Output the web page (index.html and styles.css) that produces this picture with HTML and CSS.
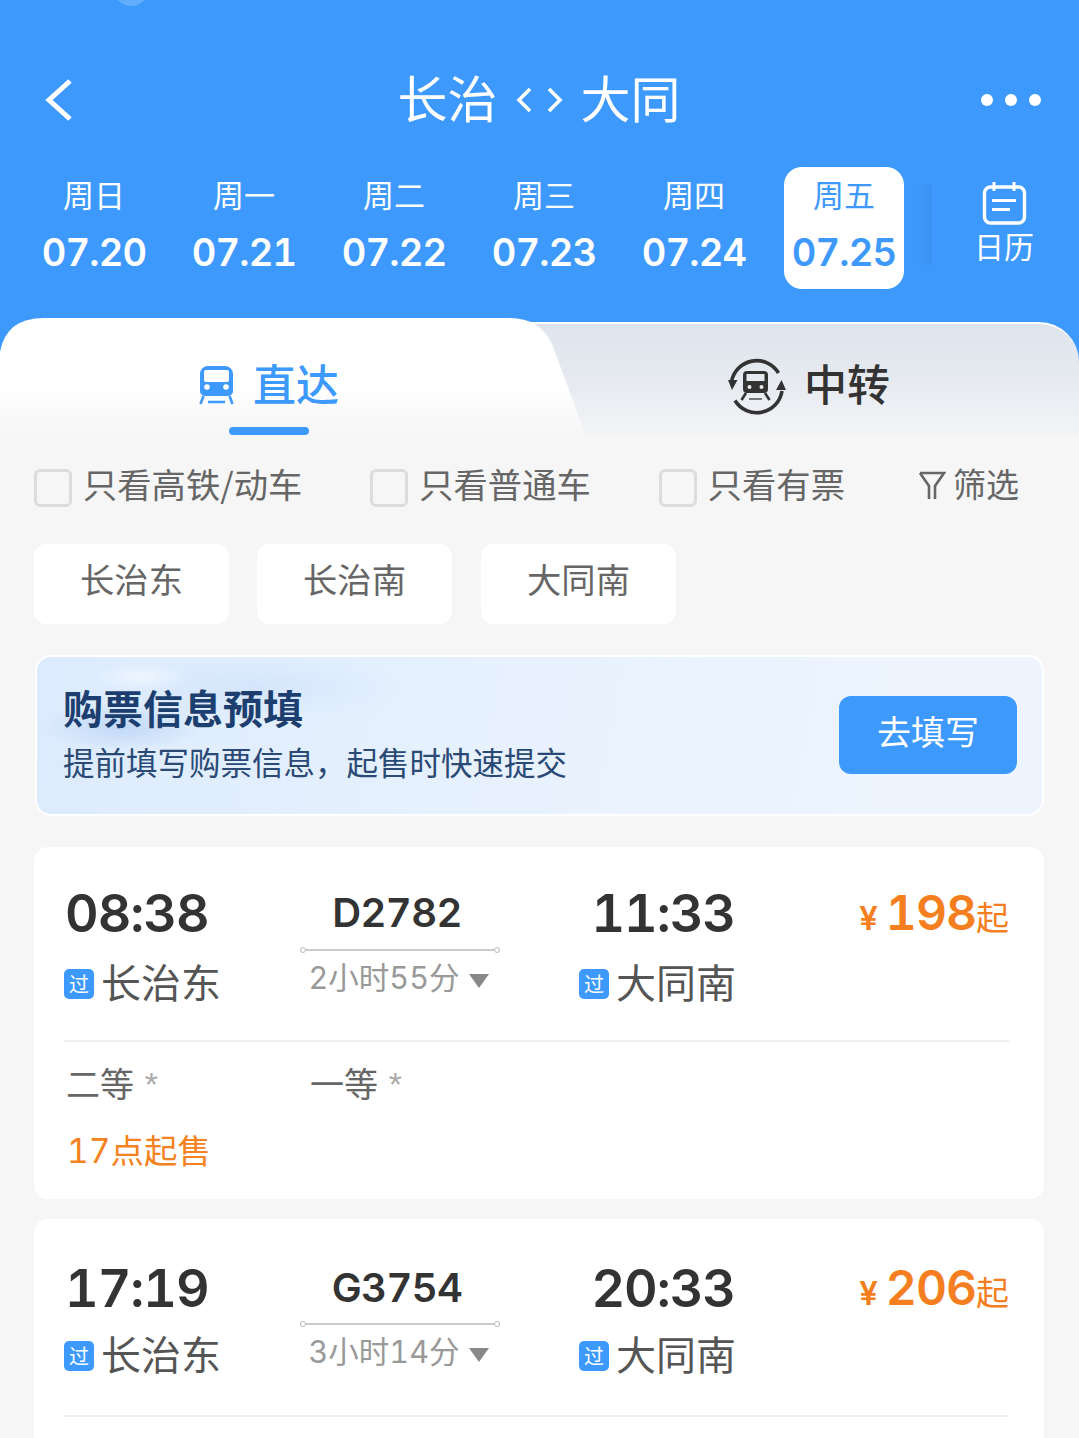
FILE: index.html
```html
<!DOCTYPE html>
<html lang="zh">
<head>
    <meta charset="UTF-8">
    <title>长治 - 大同</title>
    <link rel="stylesheet" href="styles.css">
</head>
<body>
    <div id="page">
        <div class="top">
            <span class="status-dot"></span>
            <div class="nav">
                <svg class="nav-back" width="28" height="42" viewBox="0 0 28 42"><path d="M25 2 L4 21 L25 40" fill="none" stroke="#fff" stroke-width="5"/></svg>
                <div class="nav-title">
                    <span>长治</span>
                    <svg width="47" height="30" viewBox="0 0 47 30"><path d="M14 4 L3 15 L14 26 M33 4 L44 15 L33 26" fill="none" stroke="#fff" stroke-width="3.6"/></svg>
                    <span>大同</span>
                </div>
                <div class="nav-more"><i></i><i></i><i></i></div>
            </div>
            <div class="dates">
                <div class="date"><span>周日</span><b>07.20</b></div>
                <div class="date"><span>周一</span><b>07.21</b></div>
                <div class="date"><span>周二</span><b>07.22</b></div>
                <div class="date"><span>周三</span><b>07.23</b></div>
                <div class="date"><span>周四</span><b>07.24</b></div>
                <div class="date date-on"><span>周五</span><b>07.25</b></div>
                <div class="calendar">
                    <svg width="45" height="44" viewBox="0 0 45 44"><rect x="2.5" y="6" width="40" height="36" rx="6" fill="none" stroke="#fff" stroke-width="3.4"/><path d="M12 1v9 M32 1v9" stroke="#fff" stroke-width="3"/><path d="M10 19.500h24 M10 28.500h18" stroke="#fff" stroke-width="3"/></svg>
                    <span>日历</span>
                </div>
            </div>
        </div>

        <div class="tabs-wrap">
            <div class="tabs">
                <svg class="tab-shape" width="590" height="118" viewBox="0 0 590 118">
                    <defs>
                        <linearGradient id="tabFade" x1="0" y1="0" x2="0" y2="1">
                            <stop offset="0" stop-color="#fff"/>
                            <stop offset="0.6" stop-color="#fff"/>
                            <stop offset="1" stop-color="#f6f6f7"/>
                        </linearGradient>
                    </defs>
                    <path d="M0 34 Q6 0 44 0 H510 Q540 0 552 26 L586 118 H0 Z" fill="url(#tabFade)"/>
                </svg>
                <div class="tab tab-on">
                    <svg class="tab-icon" width="36" height="40" viewBox="0 0 36 40"><path d="M9 1h17a8 8 0 0 1 8 8v17a5 5 0 0 1-5 5H6a5 5 0 0 1-5-5V9a8 8 0 0 1 8-8z M7 5a2 2 0 0 0-2 2v8a2 2 0 0 0 2 2h21a2 2 0 0 0 2-2V7a2 2 0 0 0-2-2z" fill="#3d99fc" fill-rule="evenodd"/><circle cx="8" cy="22" r="2.800" fill="#fff"/><circle cx="27" cy="22" r="2.800" fill="#fff"/><path d="M4.500 31 L1.500 39 M30.500 31 L33.500 39 M9 37h17" stroke="#3d99fc" stroke-width="2.600" fill="none"/></svg>
                    <span>直达</span>
                    <i class="tab-bar"></i>
                </div>
                <div class="tab">
                    <svg class="tab-icon-swap" width="58" height="58" viewBox="0 0 58 58"><path d="M3.500 24 A25.500 25.500 0 0 1 50.500 15 M54 33 A25.500 25.500 0 0 1 7 42.500" fill="none" stroke="#333" stroke-width="3.600"/><path d="M0 22 L9.500 22 L4 32 Z M53.500 22 L58 32 L48 32 Z" fill="#333"/><path d="M19 13h17a4 4 0 0 1 4 4v14a4 4 0 0 1-4 4H19a4 4 0 0 1-4-4V17a4 4 0 0 1 4-4z M18.500 16v7h18v-7z" fill="#333" fill-rule="evenodd"/><circle cx="21.500" cy="29" r="2" fill="#e8ebf0"/><circle cx="33.500" cy="29" r="2" fill="#e8ebf0"/><path d="M18 35 L13.500 42 M37 35 L41.500 42" stroke="#333" stroke-width="2.600" fill="none"/><path d="M21 41h13" stroke="#777" stroke-width="2" fill="none"/></svg>
                    <span>中转</span>
                </div>
            </div>
        </div>

        <div class="filters">
            <label class="check"><i></i><span>只看高铁/动车</span></label>
            <label class="check"><i></i><span>只看普通车</span></label>
            <label class="check"><i></i><span>只看有票</span></label>
            <div class="filter-btn">
                <svg width="28" height="30" viewBox="0 0 28 30"><path d="M2 2h24L17 15v13 M2 2l9 13v13" fill="none" stroke="#666" stroke-width="2.600"/></svg>
                <span>筛选</span>
            </div>
        </div>

        <div class="chips">
            <div class="chip">长治东</div>
            <div class="chip">长治南</div>
            <div class="chip">大同南</div>
        </div>

        <div class="banner">
            <div class="banner-text">
                <h2>购票信息预填</h2>
                <p>提前填写购票信息，起售时快速提交</p>
            </div>
            <button class="banner-btn">去填写</button>
        </div>

        <div class="card">
            <div class="trip">
                <div class="stop">
                    <b class="time">08:38</b>
                    <div class="station"><i>过</i><span>长治东</span></div>
                </div>
                <div class="train">
                    <b>D2782</b>
                    <div class="train-line"></div>
                    <div class="train-dur">2小时55分<i></i></div>
                </div>
                <div class="stop stop-end">
                    <b class="time">11:33</b>
                    <div class="station"><i>过</i><span>大同南</span></div>
                </div>
                <div class="price"><small>¥</small><b>198</b><span>起</span></div>
            </div>
            <div class="seats">
                <div class="seat">二等 <em>*</em></div>
                <div class="seat">一等 <em>*</em></div>
            </div>
            <div class="sale">17点起售</div>
        </div>

        <div class="card">
            <div class="trip">
                <div class="stop">
                    <b class="time">17:19</b>
                    <div class="station"><i>过</i><span>长治东</span></div>
                </div>
                <div class="train">
                    <b>G3754</b>
                    <div class="train-line"></div>
                    <div class="train-dur">3小时14分<i></i></div>
                </div>
                <div class="stop stop-end">
                    <b class="time">20:33</b>
                    <div class="station"><i>过</i><span>大同南</span></div>
                </div>
                <div class="price"><small>¥</small><b>206</b><span>起</span></div>
            </div>
        </div>
    </div>
</body>
</html>
```

FILE: styles.css
```css
html, body {
    margin: 0;
    padding: 0;
    height: 100%;
}

body {
    background: #f6f6f7;
    font-family: "Noto Sans CJK SC", "Noto Sans", sans-serif;
    overflow: hidden;
}

#page {
    height: 1438px;
    overflow: hidden;
}

.top {
    position: relative;
    background: #3d99fc;
    height: 318px;
}

.status-dot {
    position: absolute;
    left: 113px;
    top: -30px;
    width: 36px;
    height: 36px;
    border-radius: 50%;
    background: #62adfd;
}

.nav {
    height: 167px;
    padding: 32px 38px 0 45px;
    box-sizing: border-box;
    display: grid;
    grid-template-columns: 1fr auto 1fr;
    align-items: center;
}

.nav-title {
    display: flex;
    align-items: center;
    gap: 18px;
    margin-right: 8px;
    color: #fff;
    font-size: 50px;
    line-height: 60px;
}

    .nav-title span {
        padding-bottom: 8px;
    }

.nav-more {
    display: flex;
    justify-content: flex-end;
    gap: 12px;
}

    .nav-more i {
        width: 12px;
        height: 12px;
        border-radius: 50%;
        background: #fff;
    }

.dates {
    display: flex;
    gap: 30px;
    padding-left: 34px;
}

.date {
    width: 120px;
    height: 122px;
    border-radius: 18px;
    color: #fff;
    display: flex;
    flex-direction: column;
    align-items: center;
}

    .date span {
        font-size: 31px;
        line-height: 54px;
        padding-bottom: 4px;
    }

    .date b {
        font-family: Inter, sans-serif;
        font-variant-numeric: tabular-nums;
        font-weight: 600;
        font-size: 38px;
        line-height: 54px;
        letter-spacing: -.8px;
    }

.date-on {
    position: relative;
    background: #fff;
    color: #3d99fc;
}

    .date-on::after {
        content: "";
        position: absolute;
        left: 132px;
        top: 18px;
        width: 16px;
        height: 80px;
        background: linear-gradient(90deg, rgba(56, 142, 232, 0), rgba(56, 142, 232, .55));
    }

.calendar {
    width: 90px;
    margin-left: 25px;
    padding-top: 14px;
    color: #fff;
    display: flex;
    flex-direction: column;
    align-items: center;
}

    .calendar span {
        font-size: 30px;
        line-height: 40px;
    }

.tabs-wrap {
    background: linear-gradient(#3d99fc 60px, #f6f6f7 60px);
}

.tabs {
    position: relative;
    height: 118px;
    display: flex;
}

    .tabs::before {
        content: "";
        position: absolute;
        left: 0;
        right: 0;
        top: 4px;
        bottom: 0;
        border-top: 2px solid #fff;
        border-radius: 40px 40px 0 0;
        background: linear-gradient(#dde4ec, #e8ecf1 60%, #f3f4f6);
    }

.tab-shape {
    position: absolute;
    left: 0;
    top: 0;
}

.tab {
    position: relative;
    flex: 1;
    display: flex;
    align-items: center;
    justify-content: center;
    gap: 18px;
    font-size: 43px;
    font-weight: 500;
    color: #333;
    padding-top: 10px;
}

    .tab:last-child {
        flex: none;
        width: 540px;
    }

.tab-on {
    color: #3d99fc;
    padding-right: 1px;
}

.tab-icon {
    margin-top: 6px;
}

.tab-icon-swap {
    margin-top: 10px;
}

.tab-bar {
    position: absolute;
    left: 229px;
    bottom: 1px;
    width: 80px;
    height: 8px;
    border-radius: 4px;
    background: #3d99fc;
}

.filters {
    display: flex;
    gap: 68px;
    align-items: center;
    padding: 33px 0 0 34px;
    height: 38px;
    color: #666;
}

.check {
    display: flex;
    align-items: center;
    gap: 11px;
    font-size: 34.300px;
}

    .check i {
        width: 32px;
        height: 32px;
        border: 3px solid #dcdcdc;
        border-radius: 6px;
    }

    .check span,
    .filter-btn span {
        padding-bottom: 10px;
    }

.filter-btn {
    display: flex;
    align-items: center;
    gap: 7px;
    margin-left: 5px;
    font-size: 33px;
}

    .filter-btn svg {
        margin-top: -4px;
    }

.chips {
    display: flex;
    gap: 28px;
    padding: 37px 34px 0;
}

.chip {
    width: 195px;
    height: 80px;
    border-radius: 12px;
    background: #fff;
    color: #666;
    font-size: 34.300px;
    line-height: 68px;
    text-align: center;
}

    .chip:last-child {
        margin-left: 1px;
    }

.banner {
    margin: 31px 35px 0;
    height: 157px;
    border: 2px solid #fff;
    border-radius: 16px;
    padding: 0 25px 0 26px;
    display: flex;
    align-items: center;
    justify-content: space-between;
    background:
        radial-gradient(ellipse 48px 14px at 105px 20px, rgba(242, 247, 255, .85), transparent),
        radial-gradient(ellipse 80px 24px at 85px 70px, rgba(176, 205, 242, .65), transparent),
        radial-gradient(ellipse 150px 34px at 220px 30px, rgba(200, 222, 250, .5), transparent),
        linear-gradient(100deg, #dcebfd, #e8f2fe 50%, #eff5fe);
}

.banner-text {
    padding-bottom: 8px;
}

    .banner-text h2 {
        margin: 0;
        font-size: 40px;
        line-height: 56px;
        font-weight: 700;
        color: #1d3f70;
    }

    .banner-text p {
        margin: 3px 0 0;
        font-size: 31.500px;
        line-height: 46px;
        color: #2a4a75;
    }

.banner-btn {
    width: 178px;
    height: 78px;
    margin-top: -2px;
    border: none;
    border-radius: 12px;
    background: #3d99fc;
    color: #fff;
    font-family: inherit;
    font-size: 34px;
    padding: 0 0 8px;
}

.card {
    margin: 31px 35px 0 34px;
    padding: 0 35px 0 30px;
    height: 352px;
    box-sizing: border-box;
    background: #fff;
    border-radius: 14px;
}

    .card + .card {
        margin-top: 20px;
        padding-top: 3px;
    }

        .card + .card .station {
            margin-top: 7px;
        }

        .card + .card .train-line {
            margin-top: 6px;
        }

.trip {
    display: grid;
    grid-template-columns: 236px 200px 235px 1fr;
    height: 193px;
    border-bottom: 2px solid #eee;
}

.stop {
    display: flex;
    flex-direction: column;
}

.stop-end {
    align-items: flex-end;
}

    .stop-end .station {
        margin-right: -1px;
    }

.time {
    margin-top: 37px;
    font-family: Inter, sans-serif;
    font-variant-numeric: tabular-nums;
    font-weight: 600;
    font-size: 52px;
    line-height: 60px;
    letter-spacing: -1px;
    color: #333;
    padding-left: 1px;
}

.station {
    margin-top: 10px;
    display: flex;
    align-items: center;
    gap: 7px;
    font-size: 40px;
    line-height: 60px;
    color: #555;
}

    .station span {
        padding-bottom: 5px;
        line-height: 55px;
    }

    .station i {
        width: 30px;
        height: 30px;
        border-radius: 5px;
        background: #3d99fc;
        color: #fff;
        font-size: 20px;
        line-height: 30px;
        font-style: normal;
        text-align: center;
    }

.train {
    display: flex;
    flex-direction: column;
    align-items: center;
}

    .train b {
        margin-top: 37px;
        margin-left: -6px;
        font-family: Inter, sans-serif;
        font-variant-numeric: tabular-nums;
        font-weight: 600;
        font-size: 40px;
        line-height: 58px;
        letter-spacing: -.6px;
        color: #333;
    }

.train-line {
    position: relative;
    width: 100%;
    height: 2px;
    margin-top: 7px;
    background: #ccc;
}

    .train-line::before,
    .train-line::after {
        content: "";
        position: absolute;
        top: -2px;
        width: 6px;
        height: 6px;
        box-sizing: border-box;
        border: 1px solid #bbb;
        border-radius: 50%;
        background: #fff;
    }

    .train-line::before {
        left: 0;
    }

    .train-line::after {
        right: 0;
    }

.train-dur {
    margin-top: 5px;
    display: flex;
    align-items: center;
    gap: 10px;
    margin-left: -2px;
    font-family: Inter, "Noto Sans CJK SC", sans-serif;
    font-variant-numeric: tabular-nums;
    font-size: 30.500px;
    line-height: 44px;
    color: #999;
}

    .train-dur i {
        width: 0;
        height: 0;
        border-left: 10px solid transparent;
        border-right: 10px solid transparent;
        border-top: 14px solid #888;
        margin-top: 6px;
    }

.price {
    display: flex;
    justify-content: flex-end;
    align-items: baseline;
    margin-top: 36px;
    height: 60px;
    color: #f57f20;
}

    .price small {
        font-family: Inter, sans-serif;
        font-weight: 600;
        font-size: 33px;
        margin-right: 8px;
    }

    .price b {
        font-family: Inter, sans-serif;
        font-variant-numeric: tabular-nums;
        font-weight: 600;
        font-size: 48px;
        line-height: 60px;
        letter-spacing: -1px;
    }

    .price span {
        font-size: 33px;
    }

.seats {
    display: flex;
    padding: 17px 0 0 2px;
}

.seat {
    width: 244px;
    font-size: 34px;
    line-height: 48px;
    color: #666;
}

    .seat em {
        font-style: normal;
        font-family: "Liberation Sans", sans-serif;
        font-size: 34px;
        color: #aaa;
        margin-left: 3px;
        vertical-align: 1px;
        line-height: 0;
    }

.sale {
    padding: 20px 0 0 3px;
    font-family: Inter, "Noto Sans CJK SC", sans-serif;
    font-variant-numeric: tabular-nums;
    font-size: 33.500px;
    line-height: 48px;
    color: #f58220;
}
```
